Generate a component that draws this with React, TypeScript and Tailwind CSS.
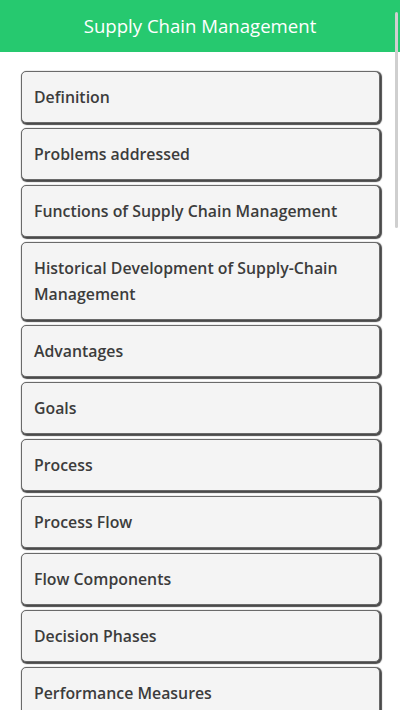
import React from "react";

const items = [
  "Definition",
  "Problems addressed",
  "Functions of Supply Chain Management",
  "Historical Development of Supply-Chain Management",
  "Advantages",
  "Goals",
  "Process",
  "Process Flow",
  "Flow Components",
  "Decision Phases",
  "Performance Measures",
  "Supply Chain Sustainability",
];

export default function App() {
  return (
    <div
      className="relative h-[710px] w-[400px] overflow-hidden bg-white"
      style={{ fontFamily: '"Open Sans", "Noto Sans", sans-serif' }}
    >
      <div className="flex h-[52px] items-center justify-center bg-[#26c96f] text-[18.6px] text-white">
        Supply Chain Management
      </div>
      <div className="flex flex-col gap-[5px] pl-[21px] pr-[20px] pt-[19px]">
        {items.map((t) => (
          <div
            key={t}
            className="rounded-[5px] border border-[#6a6a6a] bg-[#f4f4f4] px-[12px] py-[12px] text-[15.85px] font-semibold leading-[26px] text-[#3c3c3c] shadow-[1px_1px_1px_1px_#4a4a4a]"
          >
            {t}
          </div>
        ))}
      </div>
      <div className="absolute right-[2px] top-[12px] h-[216px] w-[3px] rounded-full bg-[#cfcfcf]" />
    </div>
  );
}
